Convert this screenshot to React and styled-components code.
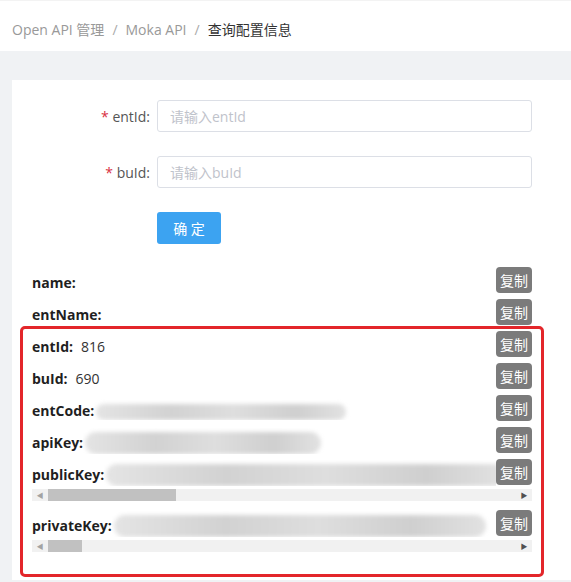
import React from "react";
import styled, { createGlobalStyle } from "styled-components";

const GlobalStyle = createGlobalStyle`
  body {
    margin: 0;
    background: #f0f2f4;
    font-family: "Open Sans", "Noto Sans CJK SC", sans-serif;
    color: #333;
  }
`;

const fields = [
  { label: "name:", value: "" },
  { label: "entName:", value: "" },
];

const marked = [
  { label: "entId:", value: "816" },
  { label: "buId:", value: "690" },
  { label: "entCode:", redact: { width: 250, height: 16 } },
  { label: "apiKey:", redact: { width: 236, height: 22 } },
  { label: "publicKey:", redact: { width: 400, height: 22 }, thumb: 128 },
  { label: "privateKey:", redact: { width: 372, height: 22 }, thumb: 34 },
];

const Row = ({ item }) => (
  <Line>
    <Key>{item.label}</Key>
    <Value>
      {item.value}
      {item.redact && (
        <Redact style={{ width: item.redact.width, height: item.redact.height }} />
      )}
    </Value>
    <CopyButton>复制</CopyButton>
  </Line>
);

const App = () => {
  return (
    <>
      <GlobalStyle />
      <Header>
        <Crumb>Open API 管理</Crumb>
        <Sep>/</Sep>
        <Crumb>Moka API</Crumb>
        <Sep>/</Sep>
        <Crumb $current>查询配置信息</Crumb>
      </Header>

      <Main>
        <Card>
          <Form>
            <Label>
              <Star>*</Star> entId:
            </Label>
            <Input placeholder="请输入entId" />
            <Label>
              <Star>*</Star> buId:
            </Label>
            <Input placeholder="请输入buId" />
            <span />
            <Submit>确 定</Submit>
          </Form>

          <List>
            {fields.map((f) => (
              <Row key={f.label} item={f} />
            ))}
            <Highlight>
              {marked.map((f) =>
                f.thumb ? (
                  <ScrollBlock key={f.label}>
                    <Row item={f} />
                    <Track>
                      <Arrow>◀</Arrow>
                      <Rail>
                        <Thumb style={{ width: f.thumb }} />
                      </Rail>
                      <Arrow $dark>▶</Arrow>
                    </Track>
                  </ScrollBlock>
                ) : (
                  <Row key={f.label} item={f} />
                )
              )}
            </Highlight>
          </List>
        </Card>
      </Main>
    </>
  );
};

const Header = styled.div`
  height: 44px;
  padding: 6px 0 0 12px;
  background: #fff;
  display: flex;
  align-items: center;
  font-size: 14px;
  border-top: 1px solid #f3f3f3;
`;

const Crumb = styled.span`
  color: ${(p) => (p.$current ? "#333" : "#999")};
`;

const Sep = styled.span`
  color: #aaa;
  padding: 0 8px;
`;

const Main = styled.div`
  padding: 29px 0 0 12px;
`;

const Card = styled.div`
  background: #fff;
  padding: 20px 39px 3px 20px;
`;

const Form = styled.div`
  display: grid;
  grid-template-columns: 125px 1fr;
  row-gap: 24px;
  align-items: center;
`;

const Label = styled.label`
  text-align: right;
  padding-right: 7px;
  font-size: 14px;
  color: #555;
`;

const Star = styled.span`
  color: #d8303f;
`;

const Input = styled.input`
  box-sizing: border-box;
  height: 32px;
  width: 100%;
  border: 1px solid #dcdfe6;
  border-radius: 3px;
  padding: 0 12px;
  font-family: inherit;
  font-size: 14px;
  outline: none;

  &::placeholder {
    color: #bfc3cb;
  }
`;

const Submit = styled.button`
  width: 64px;
  height: 32px;
  border: none;
  border-radius: 3px;
  background: #3ca3f1;
  color: #fff;
  font-family: inherit;
  font-size: 14px;
  cursor: pointer;
`;

const List = styled.div`
  margin-top: 21px;
`;

const Line = styled.div`
  display: flex;
  align-items: center;
  height: 32px;
  font-size: 14px;
`;

const Key = styled.span`
  font-weight: 700;
  color: #1f1f1f;
  padding-top: 3px;
  white-space: nowrap;
`;

const Value = styled.span`
  flex: 1;
  min-width: 0;
  overflow: hidden;
  white-space: nowrap;
  padding: 3px 0 0 8px;
  color: #333;
`;

const Redact = styled.span`
  display: inline-block;
  vertical-align: middle;
  margin-left: -6px;
  border-radius: 12px;
  background: linear-gradient(
    90deg,
    #e4e4e4,
    #d2d2d2 30%,
    #dedede 55%,
    #cfcfcf 80%,
    #e2e2e2
  );
  filter: blur(2px);
`;

const CopyButton = styled.button`
  flex: none;
  width: 36px;
  height: 26px;
  padding: 0;
  border: none;
  border-radius: 4px;
  background: #7b7b7b;
  color: #fff;
  font-family: inherit;
  font-size: 14px;
  margin-top: -3px;
`;

const Highlight = styled.div`
  margin: -3px -12px 0;
  padding: 0 9px 22px;
  border: 3px solid #e3262a;
  border-radius: 5px;
`;

const ScrollBlock = styled.div`
  margin-bottom: 7px;

  &:last-child {
    margin-bottom: 0;
  }
`;

const Track = styled.div`
  display: flex;
  align-items: center;
  height: 12px;
  background: #f1f1f1;
`;

const Arrow = styled.span`
  width: 16px;
  text-align: center;
  font-size: 7px;
  color: ${(p) => (p.$dark ? "#505050" : "#a3a3a3")};
`;

const Rail = styled.div`
  flex: 1;
  height: 100%;
`;

const Thumb = styled.div`
  height: 100%;
  background: #c1c1c1;
`;

export default App;
